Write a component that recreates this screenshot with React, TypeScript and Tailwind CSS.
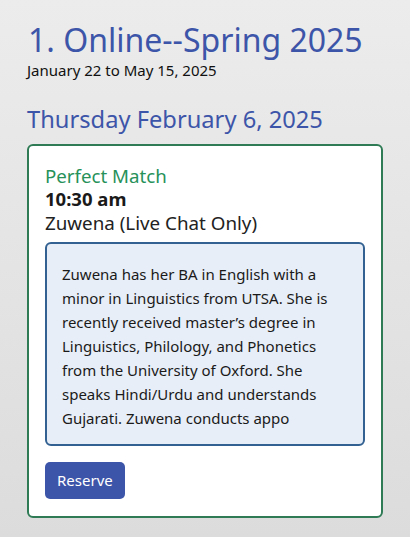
const bioLines = [
  "Zuwena has her BA in English with a",
  "minor in Linguistics from UTSA. She is",
  "recently received master\u2019s degree in",
  "Linguistics, Philology, and Phonetics",
  "from the University of Oxford. She",
  "speaks Hindi/Urdu and understands",
  "Gujarati. Zuwena conducts appo",
]

export default function App() {
  return (
    <div className="min-h-[537px] bg-gradient-to-b from-[#ececec] to-[#dcdcdc] px-[27px] pt-[20px] pb-[20px] font-['Noto_Sans',sans-serif]">
      <h1 className="text-[32px] leading-[40px] text-[#3d55a8] pl-[1px]">1. Online--Spring 2025</h1>
      <p className="text-[15px] leading-[20px] text-[#111]">January 22 to May 15, 2025</p>

      <h2 className="mt-[23px] text-[23.7px] leading-[32px] text-[#3d55a8]">Thursday February 6, 2025</h2>

      <div className="mt-[9px] w-[356px] rounded-[6px] border-2 border-[#2e7b55] bg-white px-[16px] pt-[18px] pb-[17px]">
        <div className="text-[18.7px] leading-[24px] text-[#27915a]">Perfect Match</div>
        <div className="text-[18.5px] leading-[22px] font-bold text-[#1a1a1a]">10:30 am</div>
        <div className="text-[18.8px] leading-[26px] text-[#222]">Zuwena (Live Chat Only)</div>

        <div className="mt-[6px] rounded-[6px] border-2 border-[#336292] bg-[#e8eef7] px-[15px] pt-[18px] pb-[14px] text-[15px] leading-[24px] text-[#1a1a1a]">
          {bioLines.map((line) => (
            <div key={line} className="whitespace-nowrap">{line}</div>
          ))}
        </div>

        <button className="mt-[16px] rounded-[5px] bg-[#3d55a8] px-[12px] py-[8px] text-[15px] leading-[21px] text-white">
          Reserve
        </button>
      </div>
    </div>
  )
}
